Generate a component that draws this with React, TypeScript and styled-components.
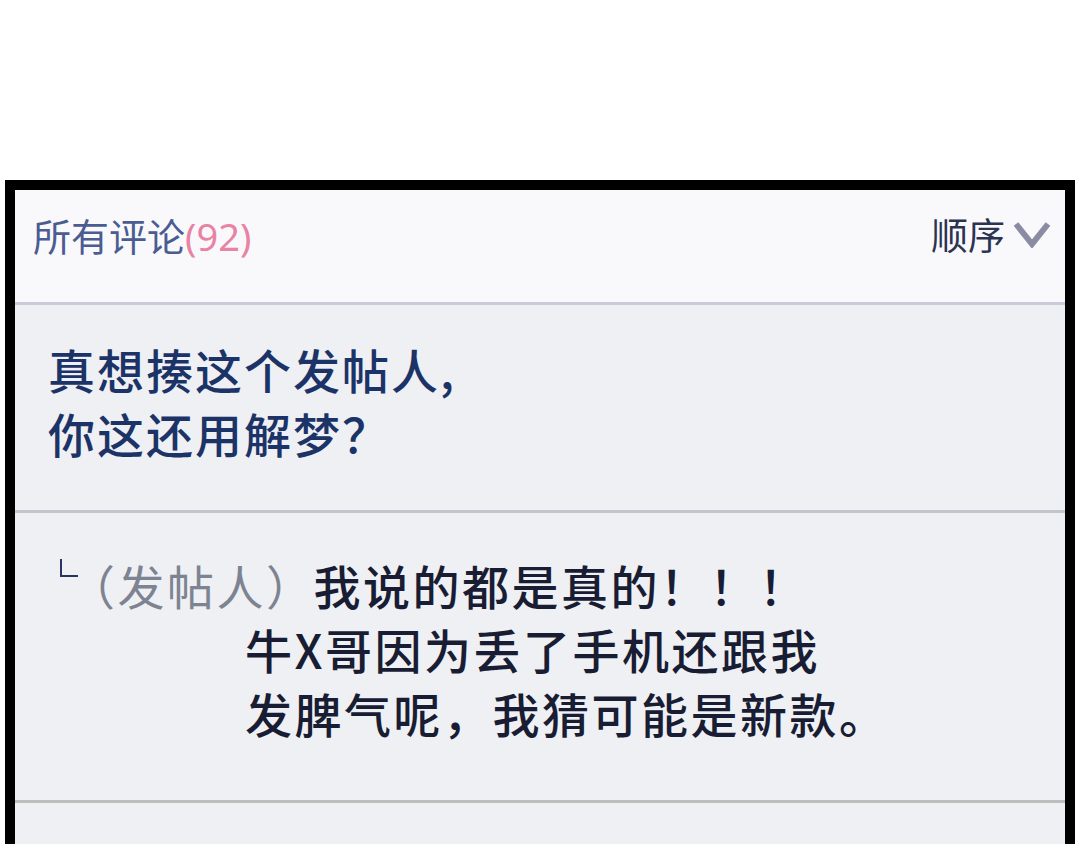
import styled, { createGlobalStyle } from 'styled-components';

const GlobalStyle = createGlobalStyle`
  html, body {
    margin: 0;
    padding: 0;
    background: #ffffff;
  }
  body {
    font-family: "Noto Sans CJK SC", "Noto Sans", sans-serif;
  }
`;

const Page = styled.div`
  width: 1080px;
  height: 844px;
  overflow: hidden;
  padding-top: 180px;
  box-sizing: border-box;
  background: #ffffff;
`;

const Panel = styled.div`
  margin: 0 5px;
  border: 10px solid #000;
  border-bottom: none;
  height: 700px;
  background: #eef0f4;
  display: flex;
  flex-direction: column;
`;

const Header = styled.div`
  height: 112px;
  background: #f9f9fc;
  display: flex;
  align-items: center;
  justify-content: space-between;
  padding: 0 14px 24px 18px;
  box-sizing: border-box;
`;

const Title = styled.div`
  font-size: 38px;
  color: #4b5c93;
`;

const Count = styled.span`
  color: #e883a4;
  font-family: "Noto Sans", sans-serif;
`;

const Sort = styled.div`
  display: flex;
  align-items: center;
  gap: 8px;
  font-size: 37px;
  color: #2b3351;
`;

const Divider = styled.div<{ tone: string }>`
  height: 3px;
  background: ${({ tone }) => tone};
`;

const Comment = styled.div<{ top: number; height: number }>`
  height: ${({ height }) => height}px;
  box-sizing: border-box;
  padding: ${({ top }) => top}px 0 0 33px;
`;

const Line = styled.div<{ indent?: number; color: string; spacing?: number }>`
  font-size: 47px;
  font-weight: 500;
  line-height: 64px;
  letter-spacing: ${({ spacing = 2.5 }) => spacing}px;
  color: ${({ color }) => color};
  padding-left: ${({ indent = 0 }) => indent}px;
  white-space: nowrap;
`;

const Corner = styled.span`
  display: inline-block;
  width: 18px;
  height: 18px;
  border-left: 2px solid #2a3460;
  border-bottom: 2px solid #2a3460;
  margin: 0 0 0 12px;
  vertical-align: 28px;
  box-sizing: border-box;
`;

const Poster = styled.span`
  color: #7d8391;
  font-weight: 400;
  margin-left: -10px;
  margin-right: -2px;
`;

const Chevron = () => (
  <svg width="38" height="28" viewBox="0 0 38 28">
    <path d="M3 4 L19 24 L35 4" fill="none" stroke="#8b8ca3" strokeWidth="6" strokeLinejoin="miter" />
  </svg>
);

export default function App() {
  return (
    <Page>
      <GlobalStyle />
      <Panel>
        <Header>
          <Title>
            所有评论<Count>(92)</Count>
          </Title>
          <Sort>
            顺序
            <Chevron />
          </Sort>
        </Header>
        <Divider tone="#c9cbdb" />
        <Comment top={32} height={205}>
          <Line color="#1c3367" spacing={2}>真想揍这个发帖人,</Line>
          <Line color="#1c3367" spacing={2}>你这还用解梦？</Line>
        </Comment>
        <Divider tone="#c4c6cf" />
        <Comment top={40} height={287}>
          <Line color="#191d33">
            <Corner />
            <Poster>（发帖人）</Poster>我说的都是真的！！！
          </Line>
          <Line color="#191d33" indent={197}>牛X哥因为丢了手机还跟我</Line>
          <Line color="#191d33" indent={197}>发脾气呢，我猜可能是新款。</Line>
        </Comment>
        <Divider tone="#bdbdbd" />
      </Panel>
    </Page>
  );
}
